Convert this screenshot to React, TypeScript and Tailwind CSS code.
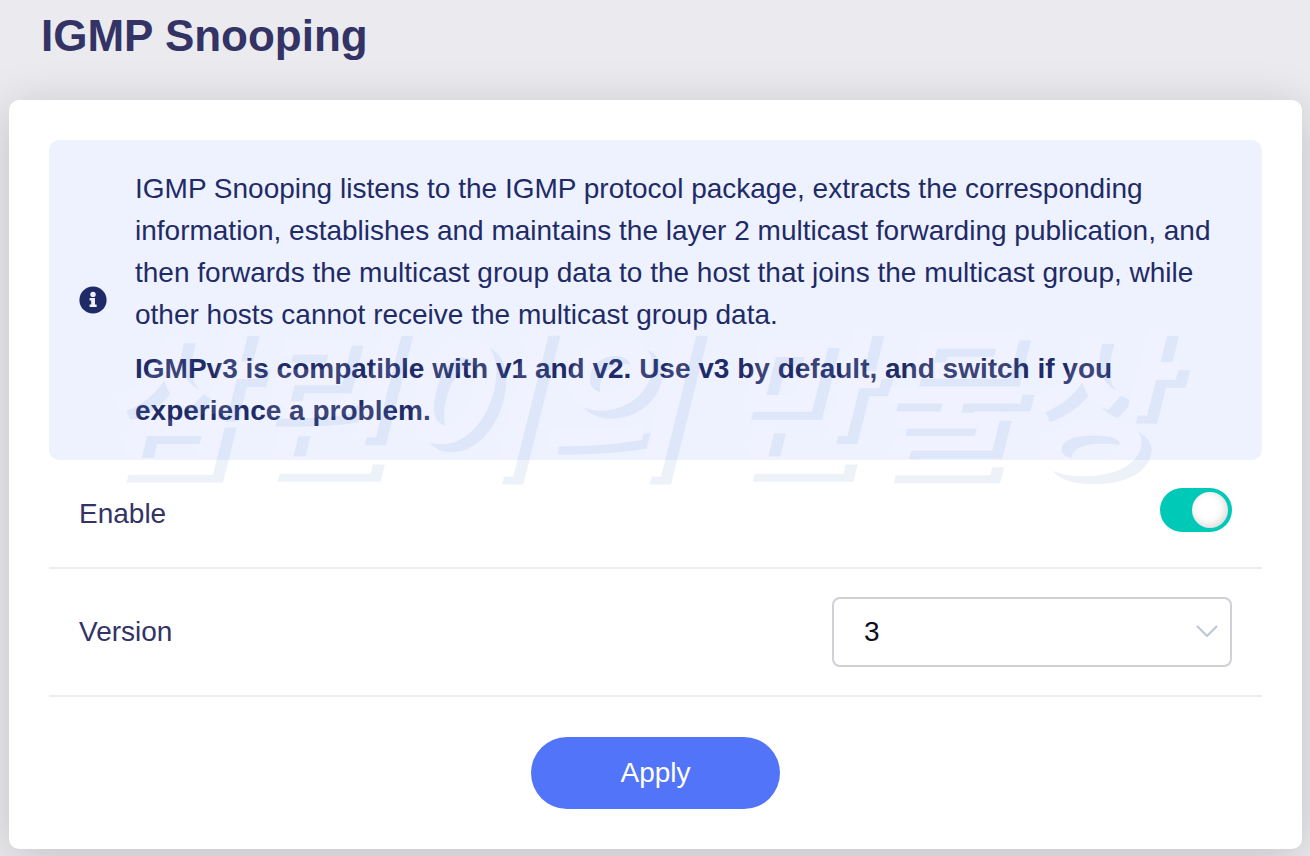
import { useState } from "react";

function InfoIcon() {
  return (
    <svg viewBox="0 0 28 28" className="size-7 shrink-0" aria-hidden="true">
      <circle cx="14" cy="14" r="13.6" fill="#1f2b66" />
      <circle cx="14" cy="8.4" r="2.7" fill="#eef2ff" />
      <path d="M10.6 12h5.4v6.4h1.6v2.6h-7v-2.6h1.6v-3.8h-1.6z" fill="#eef2ff" />
    </svg>
  );
}

// Embossed lettering: only the shadow that falls outside the face is tinted
function Watermark() {
  return (
    <>
      <svg className="absolute size-0" aria-hidden="true">
        <filter id="emboss" x="-5%" y="-5%" width="110%" height="110%" colorInterpolationFilters="sRGB">
          <feOffset in="SourceAlpha" dx="10" dy="8" result="shifted" />
          <feComposite in="shifted" in2="SourceAlpha" operator="out" result="edge" />
          <feFlood floodColor="#7196d2" floodOpacity="0.13" />
          <feComposite in2="edge" operator="in" result="shadow" />
          <feFlood floodColor="#ffffff" floodOpacity="0.12" />
          <feComposite in2="SourceAlpha" operator="in" result="face" />
          <feMerge>
            <feMergeNode in="shadow" />
            <feMergeNode in="face" />
          </feMerge>
        </filter>
      </svg>
      <div
        className="pointer-events-none absolute top-[148px] left-11 font-['Noto_Sans_CJK_KR',sans-serif] text-[160px] leading-[208px] font-bold whitespace-nowrap italic [filter:url(#emboss)]"
        aria-hidden="true"
      >
        삼린이의 만물상
      </div>
    </>
  );
}

export default function App() {
  const [enabled, setEnabled] = useState(true);
  const [version, setVersion] = useState("3");

  return (
    <div className="min-h-screen bg-[#ebebef] pb-[7px] font-['Liberation_Sans',Arial,sans-serif] text-[28px] text-[#333366]">
      <header className="flex h-[100px] items-start px-[41px] pt-3">
        <h1 className="text-[44px] leading-[48px] font-bold">IGMP Snooping</h1>
      </header>

      <main className="mr-2 ml-[9px] rounded-[10px] bg-white p-10 shadow-[0_8px_48px_rgba(0,0,0,0.18)]">
        <section className="relative flex items-center gap-7 rounded-[10px] bg-[#eef2ff] px-[30px] py-7 leading-[42px] text-[#1f2b66]">
          <InfoIcon />
          <div className="flex flex-col gap-3">
            <p>
              IGMP Snooping listens to the IGMP protocol package, extracts the corresponding
              information, establishes and maintains the layer 2 multicast forwarding publication, and
              then forwards the multicast group data to the host that joins the multicast group, while
              other hosts cannot receive the multicast group data.
            </p>
            <p className="font-bold">
              IGMPv3 is compatible with v1 and v2. Use v3 by default, and switch if you experience a
              problem.
            </p>
          </div>
          <Watermark />
        </section>

        <form onSubmit={(e) => e.preventDefault()}>
          <div className="flex items-start justify-between border-b-2 border-[#ebebf0] px-[30px] py-7">
            <label htmlFor="enable" className="leading-[51px]">Enable</label>
            <input
              id="enable"
              type="checkbox"
              role="switch"
              checked={enabled}
              onChange={(e) => setEnabled(e.target.checked)}
              className="flex h-11 w-[72px] cursor-pointer appearance-none items-center rounded-full bg-[#c9cad4] px-1 before:size-9 before:rounded-full before:bg-white before:shadow-[inset_-2px_-2px_8px_rgba(0,0,0,0.16)] checked:justify-end checked:bg-[#00c9b7]"
            />
          </div>

          <div className="flex items-center justify-between border-b-2 border-[#ebebf0] px-[30px] py-7">
            <label htmlFor="version">Version</label>
            <div className="relative w-[400px]">
              <select
                id="version"
                value={version}
                onChange={(e) => setVersion(e.target.value)}
                className="h-[70px] w-full appearance-none rounded-lg border-2 border-[#d0d0d7] bg-white px-[30px] text-[#0e0e20]"
              >
                <option value="1">1</option>
                <option value="2">2</option>
                <option value="3">3</option>
              </select>
              <svg
                viewBox="0 0 22 12"
                className="pointer-events-none absolute top-7 right-3.5 h-3 w-[22px]"
                fill="none"
                stroke="#bfc5d4"
                strokeWidth="2"
                aria-hidden="true"
              >
                <path d="M1 1l10 10L21 1" />
              </svg>
            </div>
          </div>

          <div className="mt-10 flex justify-center">
            <button type="submit" className="h-[72px] w-[249px] cursor-pointer rounded-full bg-[#5274f9] text-white">
              Apply
            </button>
          </div>
        </form>
      </main>
    </div>
  );
}
